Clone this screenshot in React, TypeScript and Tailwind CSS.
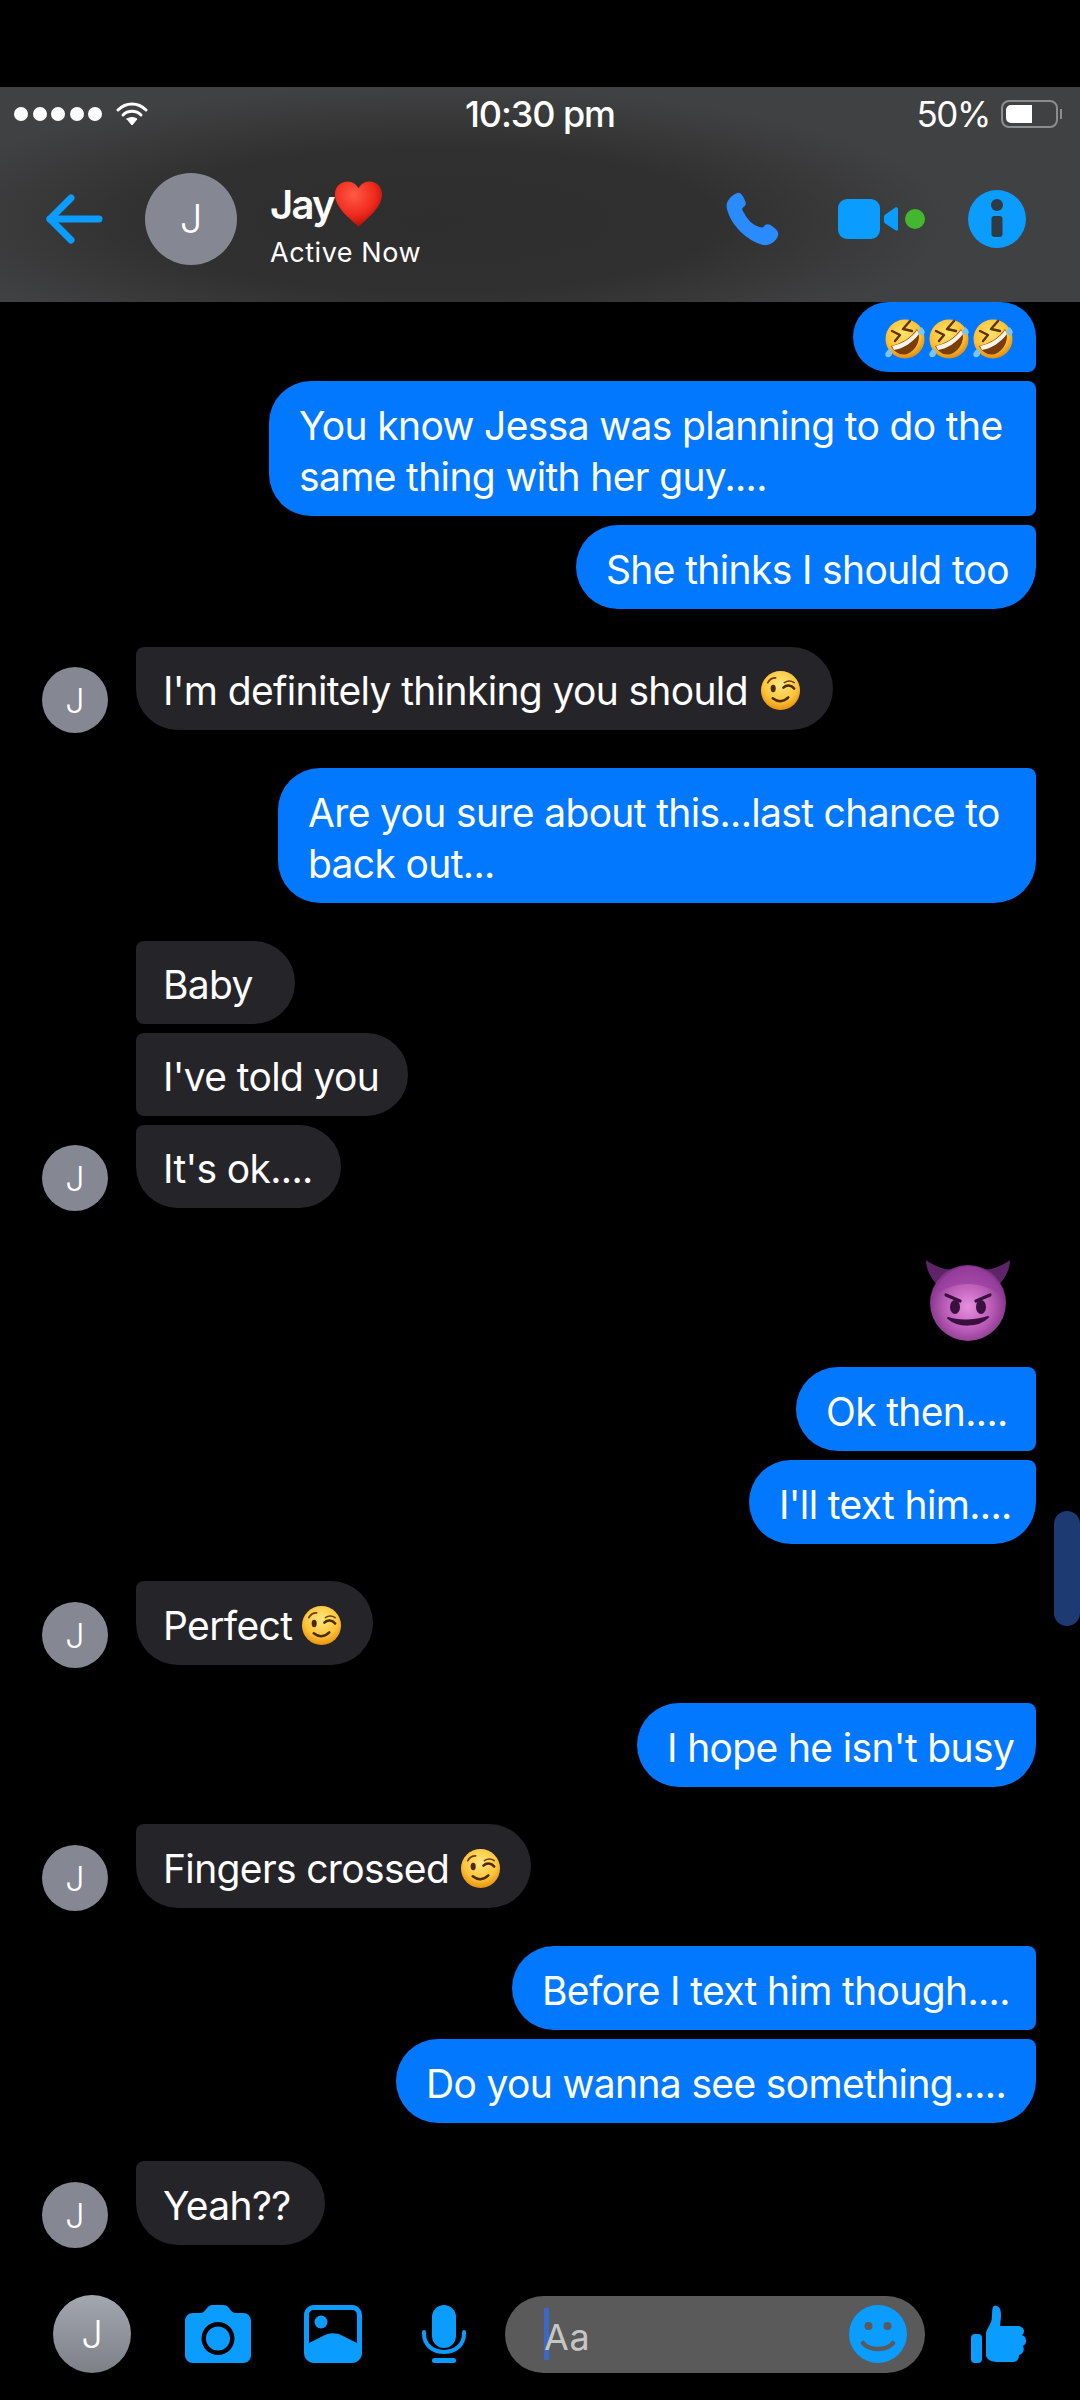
import React from "react";

const Rofl = ({ id }: { id: string }) => (
  <svg width="44" height="42" viewBox="0 0 44 42" className="shrink-0">
    <defs>
      <radialGradient id={id} cx="45%" cy="35%" r="65%">
        <stop offset="0%" stopColor="#ffe36a" />
        <stop offset="70%" stopColor="#fdbf2f" />
        <stop offset="100%" stopColor="#e08e12" />
      </radialGradient>
    </defs>
    <circle cx="22" cy="21" r="19.5" fill={`url(#${id})`} />
    <path d="M8 28 C18 26 28 20 34 11 C39 20 34 32 24 36 C17 38 11 34 8 28 Z" fill="#7a3d0c" />
    <path d="M9 28 C19 26 29 20 34 12 L36 16 C30 24 20 31 11 32 Z" fill="#f6f3e8" />
    <path d="M9 13 L17 17 L12 23" fill="none" stroke="#5c3208" strokeWidth="2.4" strokeLinecap="round" strokeLinejoin="round" />
    <path d="M27 3 L20 11 L29 13" fill="none" stroke="#5c3208" strokeWidth="2.4" strokeLinecap="round" strokeLinejoin="round" />
    <path d="M38 9 C42 12 43 15 40 17 C37 18 35 15 36 12 Z" fill="#7cc4ea" />
    <path d="M6 31 C2 34 1 38 4 39 C8 40 10 36 9 33 Z" fill="#7cc4ea" />
  </svg>
);

const Wink = ({ id }: { id: string }) => (
  <svg width="41" height="41" viewBox="0 0 42 42" className="shrink-0">
    <defs>
      <radialGradient id={id} cx="50%" cy="35%" r="65%">
        <stop offset="0%" stopColor="#ffe680" />
        <stop offset="65%" stopColor="#fdc53a" />
        <stop offset="100%" stopColor="#e8920f" />
      </radialGradient>
    </defs>
    <circle cx="21" cy="21" r="20" fill={`url(#${id})`} />
    <path d="M8 13 C10 9 13 8 16 8" fill="none" stroke="#6a3c0a" strokeWidth="1.8" strokeLinecap="round" />
    <ellipse cx="13.5" cy="19" rx="2.6" ry="3.8" fill="#4a2a08" />
    <path d="M24 18 C27 15 32 15 35 19" fill="none" stroke="#4a2a08" strokeWidth="2.6" strokeLinecap="round" />
    <path d="M25 13 C28 11 32 11 35 13" fill="none" stroke="#6a3c0a" strokeWidth="1.6" strokeLinecap="round" />
    <path d="M13 29 C18 33 24 33 29 28" fill="none" stroke="#4a2a08" strokeWidth="2.6" strokeLinecap="round" />
  </svg>
);

const Devil = () => (
  <svg width="88" height="84" viewBox="0 0 88 84">
    <defs>
      <radialGradient id="devilFace" cx="50%" cy="55%" r="55%">
        <stop offset="0%" stopColor="#e88fe0" />
        <stop offset="60%" stopColor="#b659b4" />
        <stop offset="100%" stopColor="#7a2f80" />
      </radialGradient>
    </defs>
    <path d="M2 2 C2 12 8 24 18 30 L32 12 C20 12 10 8 2 2 Z" fill="#5e2468" />
    <path d="M86 2 C86 12 80 24 70 30 L56 12 C68 12 78 8 86 2 Z" fill="#5e2468" />
    <circle cx="44" cy="45" r="38" fill="url(#devilFace)" />
    <path d="M10 38 C14 18 34 8 44 8 C58 8 74 18 78 38 C70 32 60 26 44 26 C28 26 18 32 10 38 Z" fill="#9a3fa0" opacity="0.75" />
    <path d="M22 37 L36 43" stroke="#3a103e" strokeWidth="3.2" strokeLinecap="round" />
    <path d="M66 37 L52 43" stroke="#3a103e" strokeWidth="3.2" strokeLinecap="round" />
    <ellipse cx="31" cy="49" rx="5" ry="7" fill="#3a103e" />
    <ellipse cx="57" cy="49" rx="5" ry="7" fill="#3a103e" />
    <path d="M24 60 C34 69 54 69 64 59 C54 63 34 64 24 60 Z" fill="#3a103e" stroke="#3a103e" strokeWidth="2" strokeLinejoin="round" />
  </svg>
);

const Heart = () => (
  <svg width="49" height="48" viewBox="0 0 50 48" className="shrink-0">
    <defs>
      <radialGradient id="heartFill" cx="40%" cy="30%" r="70%">
        <stop offset="0%" stopColor="#ff5a45" />
        <stop offset="65%" stopColor="#ee2a1c" />
        <stop offset="100%" stopColor="#b80f08" />
      </radialGradient>
    </defs>
    <path d="M25 47 C15 38 1 27 1 14 C1 6 7 1 14 1 C19 1 23 4 25 8 C27 4 31 1 36 1 C43 1 49 6 49 14 C49 27 35 38 25 47 Z" fill="url(#heartFill)" />
  </svg>
);

const Avatar = ({ cls }: { cls: string }) => (
  <div className={cls}>J</div>
);

const chatAvatar = "w-[66px] h-[66px] shrink-0 rounded-full bg-[#858892] flex items-center justify-center text-white text-[34px] font-light mb-[-3px]";

const base = "flex items-center text-white text-[39px] leading-[51px] tracking-[-0.65px] whitespace-nowrap pt-[4px]";
const blue = "bg-[#0278ff] pl-[30px]";
const dark = "bg-[#252429] pl-[27px]";

const Out = ({ cls, children }: { cls: string; children: React.ReactNode }) => (
  <div className="flex justify-end">
    <div className={`${base} ${blue} ${cls}`}>{children}</div>
  </div>
);

const In = ({ cls, withAvatar, children }: { cls: string; withAvatar?: boolean; children: React.ReactNode }) => (
  <div className={`flex items-end gap-[28px] ${withAvatar ? "" : "pl-[94px]"}`}>
    {withAvatar && <Avatar cls={chatAvatar} />}
    <div className={`${base} ${dark} ${cls}`}>{children}</div>
  </div>
);

export default function App() {
  return (
    <div className="w-[1080px] h-[2400px] bg-black flex flex-col pt-[87px] font-[Inter,sans-serif] overflow-hidden">
      {/* Header */}
      <header className="h-[215px] shrink-0 flex flex-col text-white bg-[radial-gradient(ellipse_48%_62%_at_40%_62%,#2e2e2e_0%,#303030_55%,#404142_100%)]">
        <div className="h-[52px] grid grid-cols-3 items-center">
          <div className="flex items-center pl-[14px]">
            <div className="flex gap-[4.5px]">
              <span className="w-[14px] h-[14px] rounded-full bg-white" />
              <span className="w-[14px] h-[14px] rounded-full bg-white" />
              <span className="w-[14px] h-[14px] rounded-full bg-white" />
              <span className="w-[14px] h-[14px] rounded-full bg-white" />
              <span className="w-[14px] h-[14px] rounded-full bg-white" />
            </div>
            <svg width="32" height="24" viewBox="0 0 32 24" className="ml-[14px]" fill="none" stroke="#fff" strokeLinecap="round">
              <path d="M2 8 C10 0 22 0 30 8" strokeWidth="3" />
              <path d="M7 13 C12 8 20 8 25 13" strokeWidth="3" />
              <path d="M11 17 L16 23 L21 17 C18 15 14 15 11 17 Z" fill="#fff" stroke="#fff" strokeWidth="1" strokeLinejoin="round" />
            </svg>
          </div>
          <div className="text-center text-[36px] font-medium tracking-[-1.1px]">10:30 pm</div>
          <div className="flex items-center justify-end pr-[18px]">
            <span className="text-[35px] tracking-[-1.4px]">50%</span>
            <div className="ml-[11px] w-[57px] h-[28px] rounded-[8px] border-2 border-[#8c8d8e] p-[3px]">
              <div className="w-[26px] h-full rounded-l-[5px] bg-white" />
            </div>
            <div className="ml-[2px] w-[2px] h-[10px] bg-[#8c8d8e]" />
          </div>
        </div>
        <div className="h-[160px] flex items-center">
          <svg width="58" height="50" viewBox="0 0 58 50" className="ml-[45px]" fill="none" stroke="#0a9cff" strokeWidth="7" strokeLinecap="round" strokeLinejoin="round">
            <path d="M26 4 L5 25 L26 46" />
            <path d="M5 25 H54" />
          </svg>
          <div className="ml-[42px] w-[92px] h-[92px] rounded-full bg-[#858892] flex items-center justify-center text-[40px] font-light">J</div>
          <div className="ml-[33px] w-[200px] pt-[9px]">
            <div className="flex items-center h-[52px]">
              <span className="text-[40px] font-semibold tracking-[-1.7px] leading-[48px] pt-[2px]">Jay</span>
              <Heart />
            </div>
            <div className="text-[27px] leading-[34px] tracking-[0.55px] mt-[6px]">Active Now</div>
          </div>
          <svg width="54" height="54" viewBox="0 0 53 53" className="ml-[255px]">
            <path d="M12 1 C15 0 17 3 19 7 C21 11 21 13 18 15 C16 17 17 18 19 21 C22 27 27 32 33 34 C36 35 37 35 38 34 C40 31 43 31 47 34 C51 37 53 39 52 43 C50 49 44 53 37 52 C22 48 6 33 2 17 C0 10 5 4 12 1 Z" fill="#2a8bff" />
          </svg>
          <div className="ml-[59px] w-[42px] h-[40px] rounded-[9px] bg-[#0a9cff]" />
          <svg width="14" height="26" viewBox="0 0 14 26" className="ml-[4px]">
            <path d="M12 1 C13 1 14 2 14 3 V23 C14 25 13 25 11 24 L2 18 C0 17 0 16 0 15 V11 C0 10 0 9 2 8 Z" fill="#0a9cff" />
          </svg>
          <div className="ml-[7px] w-[20px] h-[20px] rounded-full bg-[#43b82f]" />
          <svg width="58" height="58" viewBox="0 0 58 58" className="ml-[43px]">
            <circle cx="29" cy="29" r="29" fill="#0a9cff" />
            <circle cx="29" cy="15" r="6" fill="#2f3a42" />
            <rect x="23.5" y="26" width="11" height="21" rx="3" fill="#2f3a42" />
          </svg>
        </div>
      </header>

      {/* Messages */}
      <main className="relative flex-1 min-h-0 flex flex-col overflow-hidden pl-[42px] pr-[44px]">
        <Out cls="w-[183px] h-[70px] rounded-[36px] rounded-br-[8px] rounded-tr-[36px] pl-[28px] pt-[2px]">
          <Rofl id="r1" /><Rofl id="r2" /><Rofl id="r3" />
        </Out>
        <div className="mt-[9px]">
          <Out cls="w-[767px] h-[135px] rounded-l-[42px] rounded-r-[8px]"><span>You know Jessa was planning to do the<br />same thing with her guy....</span></Out>
        </div>
        <div className="mt-[9px]">
          <Out cls="w-[460px] h-[84px] rounded-l-[42px] rounded-br-[42px] rounded-tr-[8px]">She thinks I should too</Out>
        </div>
        <div className="mt-[38px]">
          <In withAvatar cls="w-[697px] h-[83px] rounded-r-[42px] rounded-bl-[42px] rounded-tl-[8px] gap-[12px]">
            <span>I'm definitely thinking you should</span>
            <Wink id="w1" />
          </In>
        </div>
        <div className="mt-[38px]">
          <Out cls="w-[758px] h-[135px] rounded-l-[42px] rounded-br-[42px] rounded-tr-[8px]"><span>Are you sure about this...last chance to<br />back out...</span></Out>
        </div>
        <div className="mt-[38px]">
          <In cls="w-[159px] h-[83px] rounded-r-[42px] rounded-tl-[8px] rounded-bl-[8px]">Baby</In>
        </div>
        <div className="mt-[9px]">
          <In cls="w-[272px] h-[83px] rounded-r-[42px] rounded-l-[8px]">I've told you</In>
        </div>
        <div className="mt-[9px]">
          <In withAvatar cls="w-[205px] h-[83px] rounded-r-[42px] rounded-bl-[42px] rounded-tl-[8px]">It's ok....</In>
        </div>
        <div className="mt-[50px] flex justify-end pr-[24px]">
          <Devil />
        </div>
        <div className="mt-[25px]">
          <Out cls="w-[240px] h-[84px] rounded-l-[42px] rounded-r-[8px]">Ok then....</Out>
        </div>
        <div className="mt-[9px]">
          <Out cls="w-[287px] h-[84px] rounded-l-[42px] rounded-tr-[8px] rounded-br-[42px]">I'll text him....</Out>
        </div>
        <div className="mt-[37px]">
          <In withAvatar cls="w-[237px] h-[84px] rounded-r-[42px] rounded-bl-[42px] rounded-tl-[8px] gap-[9px]">
            <span>Perfect</span>
            <Wink id="w2" />
          </In>
        </div>
        <div className="mt-[38px]">
          <Out cls="w-[399px] h-[84px] rounded-l-[42px] rounded-br-[42px] rounded-tr-[8px]">I hope he isn't busy</Out>
        </div>
        <div className="mt-[37px]">
          <In withAvatar cls="w-[395px] h-[84px] rounded-r-[42px] rounded-bl-[42px] rounded-tl-[8px] gap-[11px]">
            <span>Fingers crossed</span>
            <Wink id="w3" />
          </In>
        </div>
        <div className="mt-[38px]">
          <Out cls="w-[524px] h-[84px] rounded-l-[42px] rounded-r-[8px]">Before I text him though....</Out>
        </div>
        <div className="mt-[9px]">
          <Out cls="w-[640px] h-[84px] rounded-l-[42px] rounded-tr-[8px] rounded-br-[42px]">Do you wanna see something.....</Out>
        </div>
        <div className="mt-[38px]">
          <In withAvatar cls="w-[189px] h-[84px] rounded-r-[42px] rounded-bl-[42px] rounded-tl-[8px]">Yeah??</In>
        </div>
        {/* scroll thumb */}
        <div className="absolute right-0 top-[1209px] w-[26px] h-[115px] rounded-full bg-[#1e3a72]" />
      </main>

      {/* Composer */}
      <footer className="h-[78px] mb-[27px] shrink-0 flex items-center pl-[53px]">
        <div className="w-[78px] h-[78px] rounded-full bg-gradient-to-b from-[#a3a7b0] to-[#7d8087] flex items-center justify-center text-white text-[38px] font-light">J</div>
        <svg width="66" height="58" viewBox="0 0 66 58" className="ml-[54px]">
          <path fillRule="evenodd" d="M8 8 H15 C18 8 20 6 22 3 C23.5 1 25 0 28 0 H38 C41 0 42.5 1 44 3 C46 6 48 8 51 8 H58 C62.5 8 66 11.5 66 16 V50 C66 54.5 62.5 58 58 58 H8 C3.5 58 0 54.5 0 50 V16 C0 11.5 3.5 8 8 8 Z M33 17 A16.5 16.5 0 1 0 33 50 A16.5 16.5 0 1 0 33 17 Z M33 21.5 A12 12 0 1 1 33 45.5 A12 12 0 1 1 33 21.5 Z" fill="#0a9cff" />
        </svg>
        <svg width="58" height="58" viewBox="0 0 58 58" className="ml-[53px]">
          <path fillRule="evenodd" d="M10 0 H48 C53.5 0 58 4.5 58 10 V48 C58 53.5 53.5 58 48 58 H10 C4.5 58 0 53.5 0 48 V10 C0 4.5 4.5 0 10 0 Z M10 5 C7 5 5 7 5 10 V38 L20 30.5 C26 27.5 32 27.5 38 30.5 L53 38 V10 C53 7 51 5 48 5 Z" fill="#0a9cff" />
          <circle cx="17" cy="17" r="6.5" fill="#0a9cff" />
        </svg>
        <svg width="44" height="58" viewBox="0 0 44 58" className="ml-[60px]">
          <rect x="10" y="0" width="24" height="43" rx="12" fill="#0a9cff" />
          <path d="M2 27 V29 C2 40 11 47 22 47 C33 47 42 40 42 29 V27" fill="none" stroke="#0a9cff" strokeWidth="4" strokeLinecap="round" />
          <rect x="10" y="53" width="24" height="5" rx="2.5" fill="#0a9cff" />
        </svg>
        <div className="ml-[39px] w-[420px] h-[77px] rounded-full bg-[#5a5a5b] flex items-center pl-[39px] pr-[18px]">
          <div className="w-[5px] h-[52px] bg-[#3e66c4]" />
          <span className="ml-[-5px] text-[36px] tracking-[0.6px] text-[#c6c6c6] mt-[6px]">Aa</span>
          <svg width="58" height="58" viewBox="0 0 58 58" className="ml-auto">
            <circle cx="29" cy="29" r="29" fill="#0a9cff" />
            <circle cx="19.5" cy="21" r="4" fill="#5a5a5b" />
            <circle cx="38.5" cy="21" r="4" fill="#5a5a5b" />
            <path d="M14 38 C20 46 38 46 44 38" fill="none" stroke="#5a5a5b" strokeWidth="4.5" strokeLinecap="round" />
          </svg>
        </div>
        <svg width="56" height="58" viewBox="0 0 56 58" className="ml-[46px]">
          <rect x="0" y="29" width="11" height="29" rx="4" fill="#0a9cff" />
          <path d="M23 1 C28 0 30 4 30 10 C30 15 29 19 29 21 H46 C50 21 53 23 53 26 C53 28 52 29 51 30 C54 31 55 33 55 36 C55 38 54 40 52 41 C53 43 53 45 52 47 C51 49 49 50 48 50 C48 54 46 57 42 57 H26 C20 57 15 54 15 50 V29 C15 25 18 22 20 17 C22 12 20 2 23 1 Z" fill="#0a9cff" />
        </svg>
      </footer>
    </div>
  );
}
